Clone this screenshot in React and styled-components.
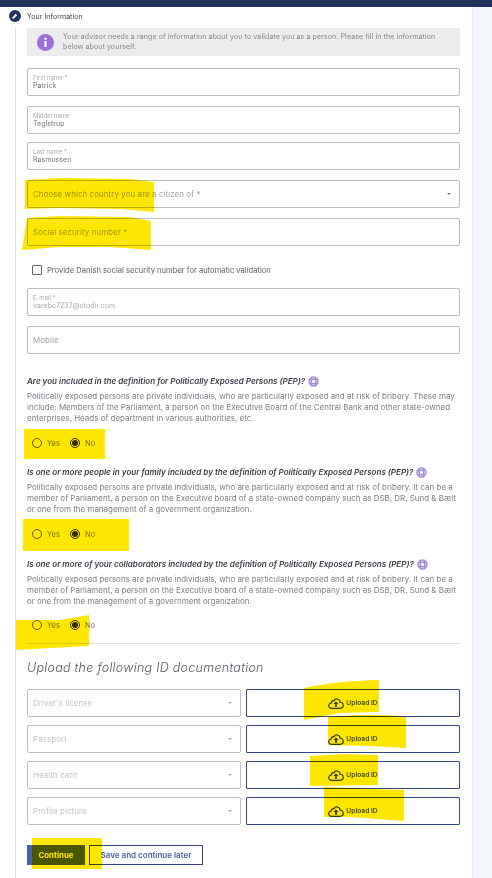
import React from "react";
import styled, { createGlobalStyle } from "styled-components";

const Global = createGlobalStyle`
  html, body { margin: 0; padding: 0; background: #f2f6fa; }
  * { box-sizing: border-box; }
  body { font-family: Inter, "Liberation Sans", sans-serif; overflow: hidden; }
`;

const Page = styled.div`
  position: relative;
  width: 492px;
  height: 878px;
  overflow: hidden;
  background: #f2f6fa;
`;
const TopBar = styled.div`
  height: 7px;
  background: #22325f;
`;
const Card = styled.main`
  width: 473px;
  height: 871px;
  background: #fff;
  border-right: 1px solid #e6e8ec;
  padding-left: 15px;
`;
const StepHead = styled.header`
  display: flex;
  align-items: center;
  gap: 6px;
  height: 20px;
  margin-left: -6px;
  padding-bottom: 2px;
`;
const StepBadge = styled.span`
  width: 12px;
  height: 12px;
  border-radius: 50%;
  background: #22325f;
  display: flex;
  align-items: center;
  justify-content: center;
`;
const StepTitle = styled.h2`
  margin: 0;
  font-size: 6.9px;
  font-weight: 400;
  color: #3c4250;
  letter-spacing: 0.1px;
`;
const StepBody = styled.div`
  border-left: 1px solid #dcdfe4;
  padding-left: 11px;
  width: 445px;
  height: 851px;
  margin-top: 1px;
`;
const InfoBox = styled.div`
  display: flex;
  align-items: center;
  gap: 9px;
  height: 28px;
  background: #ececec;
  padding-left: 10px;
  margin-bottom: 12px;
`;
const InfoIcon = styled.span`
  flex: none;
  width: 17px;
  height: 17px;
  border-radius: 50%;
  background: #9c6fd6;
  display: flex;
  align-items: center;
  justify-content: center;
`;
const InfoText = styled.p`
  margin: 0;
  font-size: 7px;
  line-height: 10px;
  color: #80848c;
  letter-spacing: 0.11px;
`;
const Field = styled.div`
  height: 28px;
  margin-bottom: ${(p) => p.$gap}px;
  border: 1px solid #bcbcbc;
  border-radius: 2px;
  background: transparent;
  padding: 0 5px;
  display: flex;
  align-items: center;
  justify-content: space-between;
`;
const Stack = styled.div`
  display: flex;
  flex-direction: column;
  justify-content: center;
  min-width: 0;
`;
const SmallLabel = styled.span`
  font-size: 6px;
  line-height: 8px;
  color: #a9abb0;
`;
const FieldValue = styled.span`
  font-size: 7px;
  line-height: 8px;
  letter-spacing: 0.05px;
  color: ${(p) => (p.$muted ? "#a6a8ad" : "#6f7278")};
`;
const Placeholder = styled.span`
  font-size: 7.9px;
  letter-spacing: 0.1px;
  color: ${(p) => (p.$light ? "#c2c3c6" : "#a1a2a6")};
`;
const Caret = styled.span`
  width: 0;
  height: 0;
  margin-right: 3px;
  border-left: 2.5px solid transparent;
  border-right: 2.5px solid transparent;
  border-top: 2.5px solid ${(p) => (p.$light ? "#a9a9a9" : "#777")};
`;
const CheckRow = styled.label`
  display: flex;
  align-items: center;
  gap: 5px;
  padding-left: 5px;
  height: 14px;
  margin: 17px 0 11px;
`;
const CheckBox = styled.span`
  width: 10px;
  height: 10px;
  border: 1px solid #666;
  border-radius: 1px;
`;
const CheckText = styled.span`
  font-size: 7.6px;
  color: #5c6068;
`;
const Question = styled.h3`
  margin: ${(p) => p.$top}px 0 0;
  height: 12px;
  display: flex;
  align-items: center;
  gap: 3px;
  font-size: 8.06px;
  font-style: italic;
  font-weight: 600;
  color: #3a3d48;
  white-space: nowrap;
`;
const Desc = styled.p`
  margin: 4px 0 0;
  font-size: 7.97px;
  line-height: 11px;
  color: #7c7f87;
  white-space: nowrap;
`;
const RadioRow = styled.div`
  display: flex;
  align-items: center;
  height: 12px;
  padding-left: 5px;
  margin-top: ${(p) => p.$top}px;
`;
const Radio = styled.span`
  flex: none;
  width: 10px;
  height: 10px;
  border-radius: 50%;
  border: 1px solid ${(p) => (p.$on ? "#333" : "#666")};
  display: flex;
  align-items: center;
  justify-content: center;
  &::after {
    content: "";
    display: ${(p) => (p.$on ? "block" : "none")};
    width: 6px;
    height: 6px;
    border-radius: 50%;
    background: #333;
  }
`;
const RadioText = styled.span`
  font-size: 7.6px;
  color: #7b7d84;
  margin: 0 10px 0 5px;
  width: ${(p) => p.$w}px;
`;
const Divider = styled.hr`
  margin: 12px 0 0;
  border: 0;
  border-top: 1px solid #dedede;
`;
const UploadHeading = styled.h2`
  margin: 15px 0 12px;
  height: 18px;
  line-height: 18px;
  font-size: 12.5px;
  font-style: italic;
  font-weight: 300;
  letter-spacing: 0.28px;
  color: #55585f;
`;
const DocGrid = styled.div`
  display: grid;
  grid-template-columns: 214px 214px;
  column-gap: 5px;
  row-gap: 8px;
`;
const DocSelect = styled(Field)`
  margin: 0;
`;
const UploadButton = styled.button`
  height: 28px;
  border: 1px solid #34497f;
  border-radius: 1px;
  background: transparent;
  padding: 0;
  display: flex;
  align-items: center;
  justify-content: center;
  gap: 2px;
  font: 600 6.7px Inter, sans-serif;
  color: #3d5187;
`;
const Actions = styled.div`
  display: flex;
  gap: 4px;
  margin-top: 20px;
`;
const PrimaryButton = styled.button`
  width: 58px;
  height: 20px;
  border: 0;
  padding: 0;
  background: #4a5fa6;
  color: #fff;
  font: 700 7.9px Inter, sans-serif;
`;
const SecondaryButton = styled.button`
  width: 114px;
  height: 20px;
  border: 1px solid #34497f;
  background: transparent;
  padding: 0;
  color: #4a5f9e;
  font: 600 8px Inter, sans-serif;
`;
const Highlights = styled.svg`
  position: absolute;
  inset: 0;
  width: 492px;
  height: 878px;
  mix-blend-mode: multiply;
  pointer-events: none;
`;

const Pencil = () => (
  <svg width="8" height="8" viewBox="0 0 8 8">
    <path d="M1.2 6.8l.4-1.8 3.2-3.2 1.4 1.4-3.2 3.2z" fill="#fff" />
  </svg>
);
const InfoGlyph = () => (
  <svg width="5" height="11" viewBox="0 0 5 11">
    <circle cx="2.5" cy="1.7" r="1.2" fill="#fff" />
    <rect x="1.4" y="4" width="2.2" height="6" fill="#fff" />
  </svg>
);
const Ring = () => (
  <svg width="11" height="11" viewBox="0 0 11 11">
    <circle cx="5.5" cy="5.5" r="4.6" fill="#cfc4ec" stroke="#9b86d6" strokeWidth="1.1" />
    <path d="M3.7 .8v9.4M7.3 .8v9.4M.8 3.7h9.4M.8 7.3h9.4" stroke="#9b86d6" strokeWidth="1" />
    <rect x="4.2" y="4.2" width="2.6" height="2.6" fill="#fff" />
  </svg>
);
const CloudUp = () => (
  <svg width="16" height="11" viewBox="0 0 16 11">
    <path
      d="M4 10.3H3.4C1.9 10.3.7 9.2.7 7.8c0-1.3 1-2.3 2.3-2.5C3.4 3.4 4.6 2.4 6 2.6 6.7 1.4 8 .7 9.3 1c1.6.3 2.7 1.6 2.8 3.2 1.8.1 3.2 1.5 3.2 3.1 0 1.7-1.4 3-3.1 3z"
      fill="none"
      stroke="#2c3f72"
      strokeWidth="1.15"
    />
    <path d="M8 3.4l2.5 2.7H8.9v2.6H7.1V6.1H5.5z" fill="#2c3f72" />
  </svg>
);

const docs = ["Driver's license", "Passport", "Health card", "Profile picture"];

const questions = [
  {
    top: 21,
    title: "Are you included in the definition for Politically Exposed Persons (PEP)?",
    lines: [
      "Politically exposed persons are private individuals, who are particularly exposed and at risk of bribery. These may",
      "include: Members of the Parliament, a person on the Executive Board of the Central Bank and other state-owned",
      "enterprises, Heads of department in various authorities, etc.",
    ],
    radioTop: 13,
  },
  {
    top: 17,
    title: "Is one or more people in your family included by the definition of Politically Exposed Persons (PEP)?",
    lines: [
      "Politically exposed persons are private individuals, who are particularly exposed and at risk of bribery. It can be a",
      "member of Parliament, a person on the Executive board of a state-owned company such as DSB, DR, Sund & Bælt",
      "or one from the management of a government organization.",
    ],
    radioTop: 13,
  },
  {
    top: 18,
    title: "Is one or more of your collaborators included by the definition of Politically Exposed Persons (PEP)?",
    lines: [
      "Politically exposed persons are private individuals, who are particularly exposed and at risk of bribery. It can be a",
      "member of Parliament, a person on the Executive board of a state-owned company such as DSB, DR, Sund & Bælt",
      "or one from the management of a government organization.",
    ],
    radioTop: 12,
  },
];

const marks = [
  "M25 180L60 178L130 179L154 182L154 212L120 209L60 208L25 209Z",
  "M27 218L60 216L130 217L151 221L151 250L110 247L60 247L22 250Z",
  "M24 429H105V459H24Z",
  "M23 519H129V551H23Z",
  "M16 620L60 620L89 615L89 646L50 648L16 650Z",
  "M304 688Q335 681 379 680V712L340 713L304 720Z",
  "M328 717L355 715L385 715L406 717V748L370 746L328 745Z",
  "M310 756L345 754L378 755V785L310 786Z",
  "M324 787L404 790V821L350 817L324 817Z",
  "M32 838H102V869H32Z",
];

export default function App() {
  return (
    <Page>
      <Global />
      <TopBar />
      <Card>
        <StepHead>
          <StepBadge><Pencil /></StepBadge>
          <StepTitle>Your Information</StepTitle>
        </StepHead>
        <StepBody>
          <InfoBox>
            <InfoIcon><InfoGlyph /></InfoIcon>
            <InfoText>
              Your advisor needs a range of information about you to validate you as a person. Please fill in the information
              <br />
              below about yourself.
            </InfoText>
          </InfoBox>
          <Field $gap={10}>
            <Stack>
              <SmallLabel>First name *</SmallLabel>
              <FieldValue>Patrick</FieldValue>
            </Stack>
          </Field>
          <Field $gap={8}>
            <Stack>
              <SmallLabel>Middel name</SmallLabel>
              <FieldValue>Teglstrup</FieldValue>
            </Stack>
          </Field>
          <Field $gap={10}>
            <Stack>
              <SmallLabel>Last name *</SmallLabel>
              <FieldValue>Rasmussen</FieldValue>
            </Stack>
          </Field>
          <Field $gap={10}>
            <Placeholder>Choose which country you are a citizen of *</Placeholder>
            <Caret />
          </Field>
          <Field $gap={0}>
            <Placeholder>Social security number *</Placeholder>
          </Field>
          <CheckRow>
            <CheckBox />
            <CheckText>Provide Danish social security number for automatic validation</CheckText>
          </CheckRow>
          <Field $gap={10}>
            <Stack>
              <SmallLabel>E-mail *</SmallLabel>
              <FieldValue $muted>varebc7237@otodir.com</FieldValue>
            </Stack>
          </Field>
          <Field $gap={0}>
            <Placeholder>Mobile</Placeholder>
          </Field>
          {questions.map((q) => (
            <React.Fragment key={q.title}>
              <Question $top={q.top}>
                {q.title} <Ring />
              </Question>
              <Desc>
                {q.lines.map((l) => (
                  <React.Fragment key={l}>
                    {l}
                    <br />
                  </React.Fragment>
                ))}
              </Desc>
              <RadioRow $top={q.radioTop}>
                <Radio />
                <RadioText $w={13}>Yes</RadioText>
                <Radio $on />
                <RadioText $w={14}>No</RadioText>
              </RadioRow>
            </React.Fragment>
          ))}
          <Divider />
          <UploadHeading>Upload the following ID documentation</UploadHeading>
          <DocGrid>
            {docs.map((d) => (
              <React.Fragment key={d}>
                <DocSelect $gap={0}>
                  <Placeholder $light>{d}</Placeholder>
                  <Caret $light />
                </DocSelect>
                <UploadButton>
                  <CloudUp /> Upload ID
                </UploadButton>
              </React.Fragment>
            ))}
          </DocGrid>
          <Actions>
            <PrimaryButton>Continue</PrimaryButton>
            <SecondaryButton>Save and continue later</SecondaryButton>
          </Actions>
        </StepBody>
      </Card>
      <Highlights viewBox="0 0 492 878">
        {marks.map((d) => (
          <path key={d} d={d} fill="#ffe600" />
        ))}
      </Highlights>
    </Page>
  );
}
